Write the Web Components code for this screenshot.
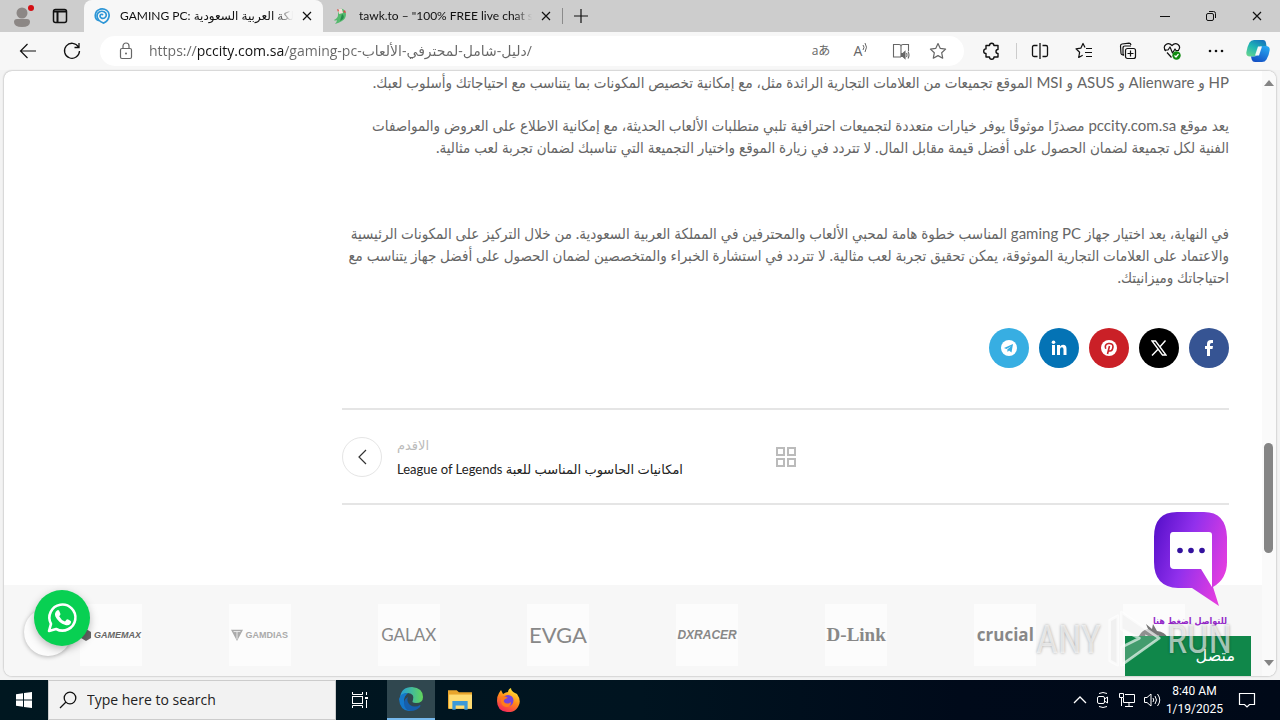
<!DOCTYPE html>
<html lang="en">
<head>
<meta charset="utf-8">
<title>GAMING PC</title>
<style>
    html, body {
        height: 100%;
    }

    body {
        margin: 0;
        overflow: hidden;
        font-family: "Open Sans", "DejaVu Sans", sans-serif;
    }
</style>
</head>
<body>
<desktop-screen></desktop-screen>

<script>
const ICONS = {
    profile: `<svg viewBox="0 0 24 24"><circle cx="11" cy="9" r="5.500" fill="#8c8785"/><path d="M3 18q0-3 3-3h10q3 0 3 3 0 5-8 5t-8-5z" fill="#8c8785"/><circle cx="20" cy="4" r="3" fill="#d40f14"/></svg>`,
    workspace: `<svg viewBox="0 0 16 16" fill="none" stroke="#111" stroke-width="1.500"><rect x="1.500" y="1.500" width="13" height="13" rx="2"/><path d="M1.500 3.500h13M5.500 4v10" stroke-width="2"/></svg>`,
    spiral: `<svg viewBox="0 0 16 16" fill="none" stroke="#2d96d6" stroke-width="1.700" stroke-linecap="round"><path d="M4.500 12.500C0 11 0 3 6 1.200c5-1.200 10 2 9 7.300-.6 3-2.500 5.500-5.500 6.500"/><path d="M9.500 15C6 14 3 11 3 8c0-4 4-5.500 7-4.300 3 1.300 3 5 .5 6.300C8 11 6 9.500 6 8c0-1.500 1.500-2 2.500-1.500"/></svg>`,
    parrot: `<svg viewBox="0 0 16 16"><path d="M5 2q2-2 5-1 3 2 3 5 0 5-4 7-3 2-7 3 2-2 2-4-2 1-3 0 4-2 4-5z" fill="#55b96e"/><path d="M5 2q2-2 4-1l1 4-4 1z" fill="#f4dcd8"/><path d="M4 1l2 1-1 2zM10 4l2-2 1 3z" fill="#e34747"/><path d="M9 6q3 2 1 5l-3 2z" fill="#258e4b"/></svg>`,
    close: `<svg viewBox="0 0 12 12" fill="none" stroke="currentColor" stroke-width="1.200"><path d="M2 2l8 8M10 2l-8 8"/></svg>`,
    plus: `<svg viewBox="0 0 16 16" fill="none" stroke="currentColor" stroke-width="1.200"><path d="M8 1v14M1 8h14"/></svg>`,
    minimize: `<svg viewBox="0 0 12 12" stroke="currentColor"><path d="M1 6.500h10"/></svg>`,
    restore: `<svg viewBox="0 0 12 12" fill="none" stroke="currentColor"><rect x="1.500" y="3.500" width="7" height="7" rx="1.500"/><path d="M4 1.500h4.500q2 0 2 2V8"/></svg>`,
    back: `<svg viewBox="0 0 18 18" fill="none" stroke="currentColor" stroke-width="1.200"><path d="M17 9H2M8.500 2L1.500 9l7 7"/></svg>`,
    refresh: `<svg viewBox="0 0 18 18" fill="none" stroke="currentColor" stroke-width="1.300"><path d="M15.500 5A7.500 7.500 0 1 0 16.500 9M16 1v4.500h-4.500"/></svg>`,
    lock: `<svg viewBox="0 0 18 18" fill="none" stroke="currentColor" stroke-width="1.200"><rect x="3.500" y="6.500" width="11" height="10" rx="1.500"/><path d="M6 6V4a3 3 0 0 1 6 0v2"/><circle cx="9" cy="11.500" r="1" fill="currentColor" stroke="none"/></svg>`,
    readbook: `<svg viewBox="0 0 18 18" fill="none" stroke="currentColor" stroke-width="1.100"><path d="M9 15H1.500V2.500H7q2 0 2 2V15M9 4.500q0-2 2-2h5.500V9"/><path d="M9.500 11.500h1.500l2-2v7l-2-2H9.500z" fill="currentColor"/><path d="M14.500 11q1 2 0 4M16 9.500q2 3.500 0 7"/></svg>`,
    aloud: `<svg viewBox="0 0 6 12" fill="none" stroke="currentColor"><path d="M1 3q2 2 0 5M3 1q3 4 0 9"/></svg>`,
    star: `<svg viewBox="0 0 18 18" fill="none" stroke="currentColor" stroke-width="1.200" stroke-linejoin="round"><path d="M9 1.500l2.300 4.900 5.300.7-3.900 3.700 1 5.400L9 13.600l-4.700 2.600 1-5.400L1.400 7.100l5.300-.7z"/></svg>`,
    puzzle: `<svg viewBox="0 0 18 18" fill="none" stroke="currentColor" stroke-width="1.400" stroke-linejoin="round"><path d="M3 3.500h3.500a2.200 2.200 0 0 1 4.400 0H15v4a2 2 0 0 0 0 4V15h-4a2.200 2.200 0 0 1-4.500 0H3v-3.500a2.300 2.300 0 0 1 0-4.600z"/></svg>`,
    split: `<svg viewBox="0 0 18 18" fill="none" stroke="currentColor" stroke-width="1.300"><path d="M6.500 3.500H3q-1.500 0-1.500 1.500v8q0 1.500 1.500 1.500h3.500M11.500 3.500H15q1.500 0 1.500 1.500v8q0 1.500-1.500 1.500h-3.500M9 1v16"/></svg>`,
    favorites: `<svg viewBox="0 0 18 18" fill="none" stroke="currentColor" stroke-width="1.200" stroke-linejoin="round"><path d="M10 5.500L8 1.500 5.800 6.200l-4.800.6 3.600 3.500-.9 5.200 4-2.300M11 6.500h6M10 10.500h7M11 14.500h6"/></svg>`,
    collections: `<svg viewBox="0 0 18 18" fill="none" stroke="currentColor" stroke-width="1.200"><path d="M5 12.500l-1.500.3q-1.300 0-1.500-1.300L1.500 4q0-1.800 1.500-2l7-.8q1.600 0 2 1.800"/><path d="M5 13.500q-1-.5-1-2V6q0-2 2-2h6"/><rect x="6.500" y="6.500" width="10" height="10" rx="2"/><path d="M11.500 8.500v6M8.500 11.500h6"/></svg>`,
    health: `<svg viewBox="0 0 18 18" fill="none" stroke="currentColor" stroke-width="1.200" stroke-linejoin="round"><path d="M3 9Q-.5 5 3 2.500q3-2 6 1 3-3 6-1 3 2.500.5 5.500M4 10.500l4.500 5M1 8h4l2-3 2.500 6L12 7l1 1.500h3"/><circle cx="13.500" cy="13.500" r="4.200" fill="#108a10" stroke="none"/><path d="M11.500 13.500l1.500 1.500 2.500-3" stroke="#fff"/></svg>`,
    more: `<svg viewBox="0 0 18 18" fill="#111"><circle cx="3" cy="9" r="1.300"/><circle cx="9" cy="9" r="1.300"/><circle cx="15" cy="9" r="1.300"/></svg>`,
    copilot: `<svg viewBox="0 0 24 24"><defs><linearGradient id="a" x1=".8" y1="0" x2=".2" y2="1"><stop stop-color="#1673bd"/><stop offset=".5" stop-color="#1fb5b4"/><stop offset="1" stop-color="#63d391"/></linearGradient><linearGradient id="b" x1=".8" y1="0" x2=".3" y2="1"><stop stop-color="#25a9f2"/><stop offset="1" stop-color="#1450c4"/></linearGradient></defs><path d="M8 1h9q2.500 0 3 3l.5 3H16q-2.500 0-3.300 3l-1.500 5q-.7 2.500-3.200 2.500H4q-4 0-3.700-4Q1 8 3.500 3.500 5 1 8 1z" fill="url(#a)"/><path d="M16 23H9q-2.500 0-3.300-2.500L5 17.500h3q2.500 0 3.200-2.500l1.500-5Q13.500 7 16 7h4.500q3.500.5 3.200 4-.7 5.500-3.200 9.500-1.500 2.500-4.500 2.500z" fill="url(#b)"/><path d="M12 7.500h4l-3 9H9z" fill="#f7f7f7"/></svg>`,
    up: `<svg viewBox="0 0 10 10" fill="#858585"><path d="M0 8l5-6 5 6z"/></svg>`,
    down: `<svg viewBox="0 0 10 10" fill="#858585"><path d="M0 2l5 6 5-6z"/></svg>`,
    facebook: `<svg viewBox="0 0 16 16" fill="#fff"><path d="M6 16V9H4V6h2V4q0-4 4-4h2v3h-1.500Q9 3 9 4.500V6h3l-.5 3H9v7z"/></svg>`,
    x: `<svg viewBox="0 0 16 16" fill="none" stroke="#fff"><path d="M1 1h3.500L15 15h-3.500zM14.500.5L9 6.800M7 9.200L1 15.500" stroke-width="1.400"/></svg>`,
    pinterest: `<svg viewBox="0 0 16 16"><circle cx="8" cy="8" r="8" fill="#fff"/><path d="M6.500 14l2-8M4.800 8.800Q3 4.500 7.500 3.500 12 3 12 6.800 11.500 11 9 11q-1.500 0-1.700-1.200" fill="none" stroke="#ca2027" stroke-width="1.600"/></svg>`,
    linkedin: `<svg viewBox="0 0 16 16" fill="#fff"><path d="M1 5h3v10H1z"/><circle cx="2.500" cy="2.200" r="1.800"/><path d="M6 5h3v1.500Q10 4.700 12 4.700q3.500 0 3.500 4V15h-3V9.500q0-2.300-1.600-2.300Q9 7.200 9 9.500V15H6z"/></svg>`,
    telegram: `<svg viewBox="0 0 16 16"><circle cx="8" cy="8" r="8" fill="#fff"/><path d="M3 8l9-4-1.500 8.500L8 10.600 6.600 12 6.300 9.500 10.500 6 5.400 9z" fill="#37aee2"/></svg>`,
    chevron: `<svg viewBox="0 0 16 16" fill="none" stroke="#333" stroke-width="1.200"><path d="M12 1L5 8l7 7"/></svg>`,
    grid: `<svg viewBox="0 0 20 20" fill="none" stroke="#bbb" stroke-width="2"><path d="M1 1h7v7H1zM12 1h7v7h-7zM1 12h7v7H1zM12 12h7v7h-7z"/></svg>`,
    whatsapp: `<svg viewBox="0 0 32 32"><path d="M3 29l2-7.200A13 13 0 1 1 10.200 27z" fill="none" stroke="#fff" stroke-width="2.600" stroke-linejoin="round"/><path d="M11 8.500q1-1 2 0l1.500 3.500q0 1-1.300 2.200 2 4 5.800 5.300l1.700-2q1-.7 4 1.500 1 .6-.3 2.700-1.800 2.200-5 1.300-7-2.200-10-8.500-1.400-3.600 1.600-6z" fill="#fff"/></svg>`,
    chat: `<svg viewBox="0 0 75 95"><defs><linearGradient id="c" x1="0" y1=".2" x2="1" y2=".6"><stop stop-color="#5a12cc"/><stop offset=".45" stop-color="#9130ec"/><stop offset="1" stop-color="#e43de0"/></linearGradient></defs><path d="M24 0h27q22 0 23 25v25q0 17-14 25l6 19-27-18H25Q1 75 1 50V25Q1 0 24 0z" fill="url(#c)"/><path d="M20 20h36q3 0 3 3v52L48 57H21q-4 0-4-4V24q0-4 3-4z" fill="#fff"/><g fill="#34129e"><circle cx="27" cy="38.500" r="2.800"/><circle cx="38" cy="38.500" r="2.800"/><circle cx="49" cy="38.500" r="2.800"/></g></svg>`,
    play: `<svg viewBox="0 0 60 68" fill="#ddd" fill-opacity=".25" stroke="#fff" stroke-opacity=".65" stroke-width="3"><path d="M16 3l42 29L16 62V42l20-10-20-10zM3 12l9-5v55l-9-5z" stroke-linejoin="round"/></svg>`,
    shield: `<svg viewBox="0 0 14 14" fill="#aaa"><path d="M0 1h14L7 14z"/><path d="M3 3h8M7 3v9" stroke="#f3f3f3"/></svg>`,
    hex: `<svg viewBox="0 0 12 12"><path d="M6 0l5 3v6l-5 3-5-3V3z" fill="#666"/></svg>`,
    snake: `<svg viewBox="0 0 32 26" fill="#777"><path d="M1 14q3-6 9-7l-2-5 6 5 1-5 4 7q8 1 11 7l-5-1 4 5-6-1-2 5-6-4-6 2 1-4-6 1 2-4z"/><path d="M7 13l7 3 7-2" stroke="#eee" fill="none"/></svg>`,
    windows: `<svg viewBox="0 0 16 16" fill="#fff"><path d="M0 2.300l7-1v6.200H0zM8 1.100L16 0v7.500H8zM0 8.500h7v6.200l-7-1zM8 8.500h8V16l-8-1.100z"/></svg>`,
    search: `<svg viewBox="0 0 18 18" fill="none" stroke="#111" stroke-width="1.300"><circle cx="11" cy="7" r="5.800"/><path d="M7 11l-6 6"/></svg>`,
    taskview: `<svg viewBox="0 0 18 18" fill="none" stroke="#fff"><path d="M1.500 1v2.500h10V1M1.500 17v-2.500h10V17"/><rect x="1.500" y="5.500" width="10" height="7"/><path d="M15.500 1v3M15.500 9v8"/><path d="M14 6h3v2h-3z" fill="#fff" stroke="none"/></svg>`,
    edge: `<svg viewBox="0 0 24 24"><defs><linearGradient id="e" x2="1"><stop stop-color="#239ddd"/><stop offset="1" stop-color="#62d65a"/></linearGradient></defs><path d="M1 11Q2 0 13 0q11 1 11 10 0 6-7 6-5 0-3-3 2-6-5-7-5 0-8 5z" fill="url(#e)"/><path d="M0 12q2-7 9-6-4 3-4 8 1 7 8 10Q1 25 0 12z" fill="#1478ca"/><path d="M9 10q-2 4 2 8 5 3 10 0 1 0 0 2-4 4-9 4-7-1-7-8 0-4 4-6z" fill="#165fac"/></svg>`,
    explorer: `<svg viewBox="0 0 22 20"><path d="M0 1h8l2 2h12v15H0z" fill="#e8a52c"/><path d="M1 5h21v13H1z" fill="#ffdc72"/><path d="M4 11h14v8h-3v-4H7v4H4z" fill="#3b99d8"/></svg>`,
    firefox: `<svg viewBox="0 0 24 24"><defs><linearGradient id="f" x1=".8" y1="0" x2=".3" y2="1"><stop stop-color="#fff13a"/><stop offset=".5" stop-color="#ff8b18"/><stop offset="1" stop-color="#f3245b"/></linearGradient></defs><path d="M3 5l2-3 2 4q3-2 5-2 0-3 3-4 0 3 4 5l2 1q5 7 1 13-4 6-11 5Q1 23 1 13q0-5 2-8z" fill="url(#f)"/><circle cx="12" cy="12.500" r="5.500" fill="#7444dc"/><path d="M5 9q4-2 7 1-5 1-4 4 3 3 7 0 0 5-5 5-6-1-5-10z" fill="#ff7b1c"/></svg>`,
    trayup: `<svg viewBox="0 0 16 16" fill="none" stroke="#fff" stroke-width="1.300"><path d="M2 11l6-6 6 6"/></svg>`,
    camera: `<svg viewBox="0 0 16 16" fill="none" stroke="#fff"><rect x="2.500" y="4.500" width="7" height="7" rx="1.500"/><path d="M9.500 7l3-2v6l-3-2M4 1.500q4-2 8 0M4 14.500q4 2 8 0"/></svg>`,
    network: `<svg viewBox="0 0 18 16" fill="none" stroke="#fff"><path d="M7 2.500h9.500v8H5.500V6M11 10.500V14M7 14.500h8"/><path d="M1.500 1.500h4v4h-4zM3.500 5.500V14"/></svg>`,
    volume: `<svg viewBox="0 0 18 16" fill="none" stroke="#fff"><path d="M1.500 5.500H4l4-3.500v12l-4-3.500H1.500zM10 6q1.500 2 0 4M12 4q3 4 0 8M14.500 2q4.500 6 0 12"/></svg>`,
    note: `<svg viewBox="0 0 18 18" fill="none" stroke="#fff" stroke-width="1.200"><path d="M1.500 2.500h15v11h-5L9 16l-2.500-2.500h-5z"/></svg>`
};

class UiIcon extends HTMLElement {
    constructor() {
        super();
        this.attachShadow({ mode: 'open' });
    }

    connectedCallback() {
        this.shadowRoot.innerHTML = `
            <style>
                :host {
                    display: block;
                    flex: none;
                    width: 18px;
                    height: 18px;
                }

                svg {
                    display: block;
                    width: 100%;
                    height: 100%;
                }
            </style>
            ${ICONS[this.getAttribute('name')]}
        `;
    }
}

customElements.define('ui-icon', UiIcon);

class BrowserTab extends HTMLElement {
    constructor() {
        super();
        this.attachShadow({ mode: 'open' });
    }

    connectedCallback() {
        this.shadowRoot.innerHTML = `
            <style>
                :host {
                    display: flex;
                    align-items: center;
                    box-sizing: border-box;
                    width: 239px;
                    padding: 0 6px 0 10px;
                    font: 12px/16px Lato, "DejaVu Sans", sans-serif;
                    color: #111;
                }

                :host([active]) {
                    background: #f7f7f7;
                    border-radius: 8px 8px 0 0;
                }

                ui-icon {
                    width: 16px;
                    height: 16px;
                }

                .title {
                    flex: 1;
                    margin: 0 4px 0 10px;
                    overflow: hidden;
                    white-space: nowrap;
                    -webkit-mask-image: linear-gradient(90deg, #000 90%, transparent);
                    mask-image: linear-gradient(90deg, #000 90%, transparent);
                }

                button {
                    border: 0;
                    padding: 4px;
                    background: none;
                    color: #111;
                }

                button ui-icon {
                    width: 12px;
                    height: 12px;
                }
            </style>
            <ui-icon name="${this.getAttribute('icon')}"></ui-icon>
            <span class="title"><slot></slot></span>
            <button aria-label="Close tab"><ui-icon name="close"></ui-icon></button>
        `;
    }
}

customElements.define('browser-tab', BrowserTab);

class TabStrip extends HTMLElement {
    constructor() {
        super();
        this.attachShadow({ mode: 'open' });
    }

    connectedCallback() {
        this.shadowRoot.innerHTML = `
            <style>
                :host {
                    display: flex;
                    height: 32px;
                    flex: none;
                    background: #cdcdcd;
                }

                .left {
                    display: flex;
                    align-items: center;
                    justify-content: space-between;
                    box-sizing: border-box;
                    width: 84px;
                    padding: 0 16px 0 11px;
                }

                .left ui-icon {
                    width: 24px;
                    height: 24px;
                }

                .left ui-icon + ui-icon {
                    width: 16px;
                    height: 16px;
                }

                button {
                    display: grid;
                    place-items: center;
                    border: 0;
                    padding: 0;
                    background: none;
                    color: #111;
                }

                .new {
                    width: 36px;
                    margin: 8px 0;
                    border-left: 1px solid #8b8b8b;
                }

                .new ui-icon {
                    width: 16px;
                    height: 16px;
                }

                .controls {
                    display: flex;
                    margin-left: auto;
                }

                .controls button {
                    width: 46px;
                }

                .controls ui-icon {
                    width: 12px;
                    height: 12px;
                }
            </style>
            <div class="left"><ui-icon name="profile"></ui-icon><ui-icon name="workspace"></ui-icon></div>
            <browser-tab active icon="spiral">GAMING PC: لكة العربية السعودية</browser-tab>
            <browser-tab icon="parrot">tawk.to – "100% FREE live chat so</browser-tab>
            <button class="new" aria-label="New tab"><ui-icon name="plus"></ui-icon></button>
            <div class="controls">
                <button aria-label="Minimize"><ui-icon name="minimize"></ui-icon></button>
                <button aria-label="Restore"><ui-icon name="restore"></ui-icon></button>
                <button aria-label="Close"><ui-icon name="close"></ui-icon></button>
            </div>
        `;
    }
}

customElements.define('tab-strip', TabStrip);

class AddressBar extends HTMLElement {
    constructor() {
        super();
        this.attachShadow({ mode: 'open' });
    }

    connectedCallback() {
        this.shadowRoot.innerHTML = `
            <style>
                :host {
                    display: flex;
                    align-items: center;
                    flex: 1;
                    box-sizing: border-box;
                    height: 30px;
                    padding: 0 9px 0 17px;
                    border-radius: 15px;
                    background: #fff;
                    color: #666;
                }

                input {
                    flex: 1;
                    min-width: 0;
                    border: 0;
                    padding: 0;
                    margin-left: 14px;
                    outline: none;
                    font: 14px/20px "Open Sans", "DejaVu Sans", sans-serif;
                    color: #666;
                    /* the host name is darker than the rest of the address */
                    background: linear-gradient(90deg, #666 47px, #111 47px, #111 135px, #666 135px);
                    -webkit-background-clip: text;
                    background-clip: text;
                    -webkit-text-fill-color: transparent;
                }

                button {
                    display: grid;
                    place-items: center;
                    width: 40px;
                    height: 28px;
                    border: 0;
                    padding: 0;
                    background: none;
                    color: #666;
                    font: 12px/20px "Open Sans", "Noto Sans CJK JP", sans-serif;
                }

                button:last-child {
                    width: 34px;
                }

                .read {
                    display: flex;
                    justify-content: center;
                    align-items: center;
                    font-size: 14px;
                }

                .read ui-icon {
                    width: 6px;
                    height: 12px;
                    margin-bottom: 6px;
                }
            </style>
            <ui-icon name="lock"></ui-icon>
            <input aria-label="Address" dir="ltr" value="https://pccity.com.sa/gaming-pc-دليل-شامل-لمحترفي-الألعاب/">
            <button aria-label="Translate">aあ</button>
            <button class="read" aria-label="Read aloud">A<ui-icon name="aloud"></ui-icon></button>
            <button aria-label="Immersive reader"><ui-icon name="readbook"></ui-icon></button>
            <button aria-label="Favorite"><ui-icon name="star"></ui-icon></button>
        `;
    }
}

customElements.define('address-bar', AddressBar);

class BrowserToolbar extends HTMLElement {
    constructor() {
        super();
        this.attachShadow({ mode: 'open' });
    }

    connectedCallback() {
        this.shadowRoot.innerHTML = `
            <style>
                :host {
                    display: flex;
                    align-items: center;
                    flex: none;
                    height: 38px;
                    padding: 0 2px 0 6px;
                    background: #f7f7f7;
                }

                button {
                    display: grid;
                    place-items: center;
                    width: 44px;
                    height: 32px;
                    border: 0;
                    padding: 0;
                    background: none;
                    color: #111;
                }

                address-bar {
                    margin: 0 6px;
                }

                .line {
                    width: 1px;
                    height: 16px;
                    margin: 0 1px 0 2px;
                    background: #ccc;
                }

                .copilot {
                    width: 40px;
                }

                .copilot ui-icon {
                    width: 24px;
                    height: 24px;
                }
            </style>
            <button aria-label="Back"><ui-icon name="back"></ui-icon></button>
            <button aria-label="Refresh"><ui-icon name="refresh"></ui-icon></button>
            <address-bar></address-bar>
            <button aria-label="Extensions"><ui-icon name="puzzle"></ui-icon></button>
            <span class="line"></span>
            <button aria-label="Split screen"><ui-icon name="split"></ui-icon></button>
            <button aria-label="Favorites"><ui-icon name="favorites"></ui-icon></button>
            <button aria-label="Collections"><ui-icon name="collections"></ui-icon></button>
            <button aria-label="Browser essentials"><ui-icon name="health"></ui-icon></button>
            <button aria-label="More"><ui-icon name="more"></ui-icon></button>
            <button class="copilot" aria-label="Copilot"><ui-icon name="copilot"></ui-icon></button>
        `;
    }
}

customElements.define('browser-toolbar', BrowserToolbar);

class ShareLink extends HTMLElement {
    constructor() {
        super();
        this.attachShadow({ mode: 'open' });
    }

    connectedCallback() {
        const network = this.getAttribute('network');
        this.shadowRoot.innerHTML = `
            <style>
                :host {
                    display: block;
                }

                a {
                    display: grid;
                    place-items: center;
                    width: 40px;
                    height: 40px;
                    border-radius: 50%;
                    background: var(--share-color);
                }

                ui-icon {
                    width: 16px;
                    height: 16px;
                }
            </style>
            <a href="#" aria-label="${network}"><ui-icon name="${network}"></ui-icon></a>
        `;
    }
}

customElements.define('share-link', ShareLink);

class PostNavigation extends HTMLElement {
    constructor() {
        super();
        this.attachShadow({ mode: 'open' });
    }

    connectedCallback() {
        this.shadowRoot.innerHTML = `
            <style>
                :host {
                    display: grid;
                    grid-template-columns: 1fr auto 1fr;
                    align-items: center;
                    direction: ltr;
                    height: 93px;
                    border: solid #e5e5e5;
                    border-width: 2px 0;
                    font-family: Lato, "DejaVu Sans", sans-serif;
                }

                a {
                    color: #222;
                    text-decoration: none;
                }

                .prev {
                    display: flex;
                    align-items: center;
                    gap: 15px;
                }

                .circle {
                    display: grid;
                    place-items: center;
                    box-sizing: border-box;
                    width: 40px;
                    height: 40px;
                    border: 1px solid #e5e5e5;
                    border-radius: 50%;
                }

                .circle ui-icon {
                    width: 16px;
                    height: 16px;
                }

                .text {
                    display: grid;
                    font-size: 13px;
                    line-height: 24px;
                    white-space: nowrap;
                }

                .label {
                    color: #bbb;
                }

                .all ui-icon {
                    width: 20px;
                    height: 20px;
                }
            </style>
            <a class="prev" href="#">
                <span class="circle"><ui-icon name="chevron"></ui-icon></span>
                <span class="text">
                    <span class="label">الاقدم</span>
                    <span dir="rtl">امكانيات الحاسوب المناسب للعبة League of Legends</span>
                </span>
            </a>
            <a class="all" href="#" aria-label="All posts"><ui-icon name="grid"></ui-icon></a>
        `;
    }
}

customElements.define('post-navigation', PostNavigation);

class BlogArticle extends HTMLElement {
    constructor() {
        super();
        this.attachShadow({ mode: 'open' });
    }

    connectedCallback() {
        this.shadowRoot.innerHTML = `
            <style>
                :host {
                    display: block;
                    direction: rtl;
                    color: #666;
                    font: 15px/22px Lato, "DejaVu Sans Condensed", "DejaVu Sans", sans-serif;
                }

                p {
                    margin: 0 0 21px;
                    white-space: nowrap;
                }

                .share {
                    display: flex;
                    gap: 10px;
                    margin: 40px 0;
                }
            </style>
            <p>HP و Alienware و ASUS و MSI الموقع تجميعات من العلامات التجارية الرائدة مثل، مع إمكانية تخصيص المكونات بما يتناسب مع احتياجاتك وأسلوب لعبك.</p>
            <p>يعد موقع pccity.com.sa مصدرًا موثوقًا يوفر خيارات متعددة لتجميعات احترافية تلبي متطلبات الألعاب الحديثة، مع إمكانية الاطلاع على العروض والمواصفات<br>الفنية لكل تجميعة لضمان الحصول على أفضل قيمة مقابل المال. لا تتردد في زيارة الموقع واختيار التجميعة التي تناسبك لضمان تجربة لعب مثالية.</p>
            <p>&nbsp;</p>
            <p>في النهاية، يعد اختيار جهاز gaming PC المناسب خطوة هامة لمحبي الألعاب والمحترفين في المملكة العربية السعودية. من خلال التركيز على المكونات الرئيسية<br>والاعتماد على العلامات التجارية الموثوقة، يمكن تحقيق تجربة لعب مثالية. لا تتردد في استشارة الخبراء والمتخصصين لضمان الحصول على أفضل جهاز يتناسب مع<br>احتياجاتك وميزانيتك.</p>
            <div class="share">
                <share-link network="facebook" style="--share-color: #365493"></share-link>
                <share-link network="x" style="--share-color: #000"></share-link>
                <share-link network="pinterest" style="--share-color: #ca2027"></share-link>
                <share-link network="linkedin" style="--share-color: #0473b5"></share-link>
                <share-link network="telegram" style="--share-color: #37aee2"></share-link>
            </div>
            <post-navigation></post-navigation>
        `;
    }
}

customElements.define('blog-article', BlogArticle);

class BrandLogo extends HTMLElement {
    constructor() {
        super();
        this.attachShadow({ mode: 'open' });
    }

    connectedCallback() {
        this.shadowRoot.innerHTML = `
            <style>
                :host {
                    display: flex;
                    align-items: center;
                    justify-content: center;
                    gap: 2px;
                    width: 62px;
                    height: 62px;
                    background: #fcfcfc;
                    color: #888;
                    font-size: 10px;
                    line-height: 20px;
                    white-space: nowrap;
                }
            </style>
            <slot></slot>
        `;
    }
}

customElements.define('brand-logo', BrandLogo);

class BrandStrip extends HTMLElement {
    constructor() {
        super();
        this.attachShadow({ mode: 'open' });
    }

    connectedCallback() {
        this.shadowRoot.innerHTML = `
            <style>
                :host {
                    display: grid;
                    grid-template-columns: repeat(8, 1fr);
                    justify-items: center;
                    padding: 19px 33px 19px 32px;
                    background: #f7f7f7;
                }

                ui-icon {
                    width: 12px;
                    height: 12px;
                }

                .gamemax {
                    color: #666;
                    font: italic bold 9px/20px "Liberation Sans", sans-serif;
                }

                .gamdias {
                    color: #aaa;
                    font: bold 9px/20px "Liberation Sans", sans-serif;
                }

                .galax {
                    font: 17px/20px Lato, sans-serif;
                }

                .evga {
                    font: 22px/20px Lato, sans-serif;
                }

                .dxracer {
                    font: italic bold 12px/20px "Liberation Sans", sans-serif;
                }

                .dlink {
                    font: bold 19px/20px "Liberation Serif", serif;
                }

                .crucial {
                    font: bold 17px/20px "Open Sans", sans-serif;
                }

                .snake {
                    width: 32px;
                    height: 26px;
                }
            </style>
            <brand-logo class="gamemax"><ui-icon name="hex"></ui-icon>GAMEMAX</brand-logo>
            <brand-logo class="gamdias"><ui-icon name="shield"></ui-icon>GAMDIAS</brand-logo>
            <brand-logo class="galax">GALAX</brand-logo>
            <brand-logo class="evga">EVGA</brand-logo>
            <brand-logo class="dxracer">DXRACER</brand-logo>
            <brand-logo class="dlink">D-Link</brand-logo>
            <brand-logo class="crucial">crucial</brand-logo>
            <brand-logo><ui-icon class="snake" name="snake"></ui-icon></brand-logo>
        `;
    }
}

customElements.define('brand-strip', BrandStrip);

class ScrollRail extends HTMLElement {
    constructor() {
        super();
        this.attachShadow({ mode: 'open' });
    }

    connectedCallback() {
        this.shadowRoot.innerHTML = `
            <style>
                :host {
                    display: flex;
                    flex-direction: column;
                    align-items: center;
                    box-sizing: border-box;
                    width: 14px;
                    padding: 7px 1px 8px 0;
                    background: #fafafa;
                }

                ui-icon {
                    width: 10px;
                    height: 10px;
                }

                .before {
                    flex: 354;
                }

                .thumb {
                    flex: 110;
                    width: 9px;
                    border-radius: 5px;
                    background: #858585;
                }

                .after {
                    flex: 105;
                }
            </style>
            <ui-icon name="up"></ui-icon>
            <div class="before"></div>
            <div class="thumb"></div>
            <div class="after"></div>
            <ui-icon name="down"></ui-icon>
        `;
    }
}

customElements.define('scroll-rail', ScrollRail);

class FloatingWidgets extends HTMLElement {
    constructor() {
        super();
        this.attachShadow({ mode: 'open' });
    }

    connectedCallback() {
        this.shadowRoot.innerHTML = `
            <style>
                :host {
                    position: absolute;
                    inset: 0;
                    pointer-events: none;
                }

                .bubble,
                .whatsapp,
                .chat,
                .online,
                .watermark {
                    position: absolute;
                }

                .bubble {
                    left: 20px;
                    bottom: 20px;
                    width: 48px;
                    height: 48px;
                    border-radius: 50%;
                    background: #fcfcfc;
                    box-shadow: 0 1px 4px #0004;
                }

                .whatsapp {
                    display: grid;
                    place-items: center;
                    left: 30px;
                    bottom: 30px;
                    width: 56px;
                    height: 56px;
                    border-radius: 50%;
                    background: #08d052;
                    box-shadow: 0 3px 8px #0004;
                }

                .whatsapp ui-icon {
                    width: 32px;
                    height: 32px;
                }

                .chat {
                    right: 48px;
                    bottom: 43px;
                    display: grid;
                    justify-items: center;
                    gap: 2px;
                    width: 76px;
                    color: #9427c9;
                    font: bold 9px/24px "DejaVu Sans Condensed", "DejaVu Sans", sans-serif;
                    text-decoration: none;
                    white-space: nowrap;
                }

                .chat ui-icon {
                    width: 75px;
                    height: 95px;
                }

                .online {
                    right: 25px;
                    bottom: 0;
                    width: 126px;
                    height: 40px;
                    padding: 0 16px;
                    border: 0;
                    background: #10874a;
                    color: #fff;
                    font: 16px/20px "DejaVu Sans", sans-serif;
                    text-align: right;
                }

                .watermark {
                    right: 44px;
                    bottom: 2px;
                    display: flex;
                    align-items: center;
                    gap: 6px;
                    color: #ffffffa0;
                    font: 38px/40px "Liberation Sans Narrow", "Roboto Condensed", "Open Sans Condensed", "Liberation Sans", sans-serif;
                    text-shadow: 0 0 3px #0005;
                }

                .watermark ui-icon {
                    width: 54px;
                    height: 68px;
                }
            </style>
            <span class="bubble"></span>
            <a class="whatsapp" href="#" aria-label="WhatsApp"><ui-icon name="whatsapp"></ui-icon></a>
            <a class="chat" href="#"><ui-icon name="chat"></ui-icon><span dir="rtl">للتواصل اضغط هنا</span></a>
            <button class="online">متصل</button>
            <div class="watermark"><span>ANY</span><ui-icon name="play"></ui-icon><span>RUN</span></div>
        `;
    }
}

customElements.define('floating-widgets', FloatingWidgets);

class WebView extends HTMLElement {
    constructor() {
        super();
        this.attachShadow({ mode: 'open' });
    }

    connectedCallback() {
        this.shadowRoot.innerHTML = `
            <style>
                :host {
                    display: flex;
                    position: relative;
                    flex: 1;
                    min-height: 0;
                    margin: 1px 4px 4px;
                    border-radius: 8px;
                    overflow: hidden;
                    background: #fff;
                    box-shadow: 0 0 2px #0006;
                }

                .page {
                    flex: 1;
                    min-width: 0;
                    overflow: hidden;
                }

                .content {
                    display: grid;
                    grid-template-columns: 338fr 887fr;
                    padding: 0 33px 80px 0;
                }

                blog-article {
                    grid-column: 2;
                    min-width: 0;
                }
            </style>
            <div class="page">
                <div class="content"><blog-article lang="ar"></blog-article></div>
                <brand-strip></brand-strip>
            </div>
            <scroll-rail></scroll-rail>
            <floating-widgets></floating-widgets>
        `;
    }
}

customElements.define('web-view', WebView);

class TaskBar extends HTMLElement {
    constructor() {
        super();
        this.attachShadow({ mode: 'open' });
    }

    connectedCallback() {
        this.shadowRoot.innerHTML = `
            <style>
                :host {
                    display: flex;
                    flex: none;
                    height: 40px;
                    background: linear-gradient(90deg, #001720, #001420 50%, #000a1a 75%, #000918);
                    color: #fff;
                }

                button {
                    display: grid;
                    place-items: center;
                    width: 48px;
                    border: 0;
                    padding: 0;
                    background: none;
                }

                button ui-icon {
                    width: 24px;
                    height: 24px;
                }

                .start ui-icon {
                    width: 16px;
                    height: 16px;
                }

                .view {
                    margin-right: 3px;
                }

                .view ui-icon {
                    width: 18px;
                    height: 18px;
                }

                .open {
                    box-sizing: border-box;
                    margin-right: 1px;
                    border-bottom: 2px solid #76b9ed;
                    background: #30474f;
                }

                label {
                    display: flex;
                    align-items: center;
                    gap: 10px;
                    box-sizing: border-box;
                    width: 288px;
                    padding: 0 10px;
                    border: 1px solid #ccc;
                    background: #f2f2f2;
                }

                input {
                    flex: 1;
                    min-width: 0;
                    border: 0;
                    padding: 0;
                    outline: none;
                    background: none;
                    font: 14px/20px "Open Sans", sans-serif;
                }

                input::placeholder {
                    color: #222;
                    opacity: 1;
                }

                .tray {
                    display: flex;
                    align-items: center;
                    gap: 7px;
                    margin-left: auto;
                    padding-right: 24px;
                    font: 12px/18px Roboto, sans-serif;
                }

                .tray ui-icon {
                    width: 16px;
                    height: 16px;
                }

                .tray .wide {
                    width: 18px;
                }

                .clock {
                    text-align: center;
                    margin: 0 8px 0 -2px;
                }

                .tray .note {
                    width: 18px;
                    height: 18px;
                }
            </style>
            <button class="start" aria-label="Start"><ui-icon name="windows"></ui-icon></button>
            <label><ui-icon name="search"></ui-icon><input aria-label="Search" placeholder="Type here to search"></label>
            <button class="view" aria-label="Task view"><ui-icon name="taskview"></ui-icon></button>
            <button class="open" aria-label="Edge"><ui-icon name="edge"></ui-icon></button>
            <button aria-label="File Explorer"><ui-icon name="explorer"></ui-icon></button>
            <button aria-label="Firefox"><ui-icon name="firefox"></ui-icon></button>
            <div class="tray">
                <ui-icon name="trayup"></ui-icon>
                <ui-icon name="camera"></ui-icon>
                <ui-icon class="wide" name="network"></ui-icon>
                <ui-icon class="wide" name="volume"></ui-icon>
                <div class="clock">8:40 AM<br>1/19/2025</div>
                <ui-icon class="note" name="note"></ui-icon>
            </div>
        `;
    }
}

customElements.define('task-bar', TaskBar);

class DesktopScreen extends HTMLElement {
    constructor() {
        super();
        this.attachShadow({ mode: 'open' });
    }

    connectedCallback() {
        this.shadowRoot.innerHTML = `
            <style>
                :host {
                    display: flex;
                    flex-direction: column;
                    height: 100vh;
                    background: #f3f3f3;
                }
            </style>
            <tab-strip></tab-strip>
            <browser-toolbar></browser-toolbar>
            <web-view></web-view>
            <task-bar></task-bar>
        `;
    }
}

customElements.define('desktop-screen', DesktopScreen);
</script>
</body>
</html>
